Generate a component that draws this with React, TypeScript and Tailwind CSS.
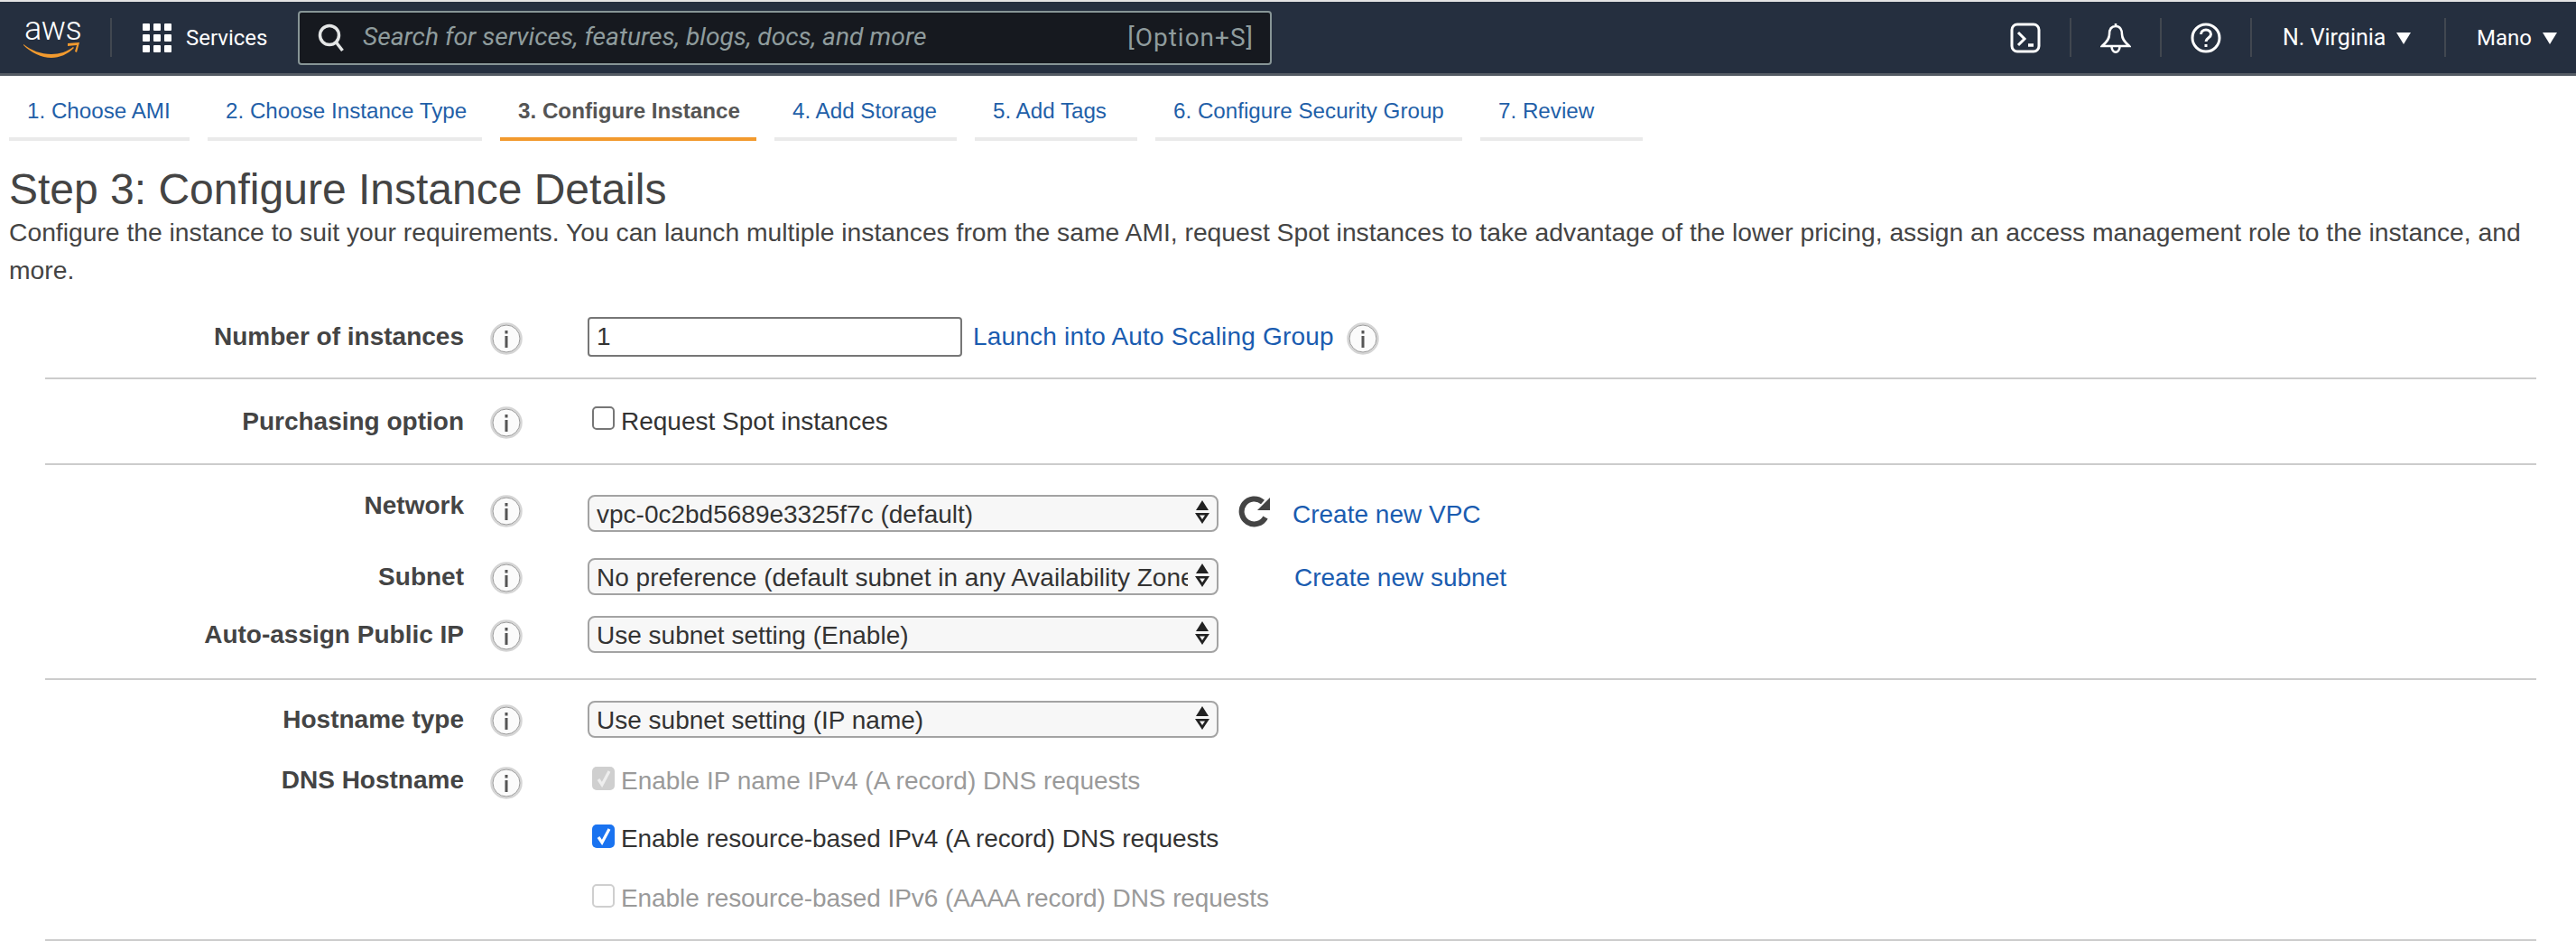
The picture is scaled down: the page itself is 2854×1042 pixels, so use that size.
const Info = ({ className = "" }: { className?: string }) => (
  <svg width="36" height="36" viewBox="0 0 36 36" className={`shrink-0 ${className}`}>
    <circle cx="18" cy="18" r="16.5" fill="#fbfbfb" stroke="#d5d5d5" strokeWidth="2.5" />
    <circle cx="18" cy="18" r="15" fill="none" stroke="#9a9a9a" strokeWidth="1" />
    <rect x="16.5" y="9" width="3" height="3.5" fill="#555" />
    <rect x="16.5" y="15" width="3" height="13" fill="#555" />
  </svg>
);

const Divider = () => <div className="w-[2px] h-[43px] bg-[#414750] shrink-0" />;

const Caret = () => (
  <svg width="16" height="14" viewBox="0 0 16 14" className="shrink-0">
    <path d="M0 1h16L8 14z" fill="#fff" />
  </svg>
);

const tabs = [
  { label: "1. Choose AMI", w: "w-[200px]" },
  { label: "2. Choose Instance Type", w: "w-[304px]" },
  { label: "3. Configure Instance", w: "w-[284px]", active: true },
  { label: "4. Add Storage", w: "w-[202px]" },
  { label: "5. Add Tags", w: "w-[180px]" },
  { label: "6. Configure Security Group", w: "w-[340px]" },
  { label: "7. Review", w: "w-[180px]" },
];

const TopBar = () => (
  <div className="border-t-2 border-t-[#e4e4e4] border-b-[3px] border-b-[#545b64] bg-[#252f3f] h-[84px] flex items-center text-white font-['Roboto',sans-serif]">
    <div className="w-[122px] pl-[27px] shrink-0 flex flex-col h-[42px] relative">
      <span className="text-[36px] leading-[30px] font-light tracking-[-0.5px] -mt-[4px]">aws</span>
      <svg width="64" height="20" viewBox="0 0 64 20" className="absolute left-[25px] top-[24px]">
        <path d="M1 4c9 7 19 11 31 11 9 0 18-3 24-8l1 1c-7 7-16 11-25 11C21 19 9 13 1 5z" fill="#f29a2e" />
        <path d="M50 3l13-1-3 11-2-1 2-7-10 1z" fill="#f29a2e" />
      </svg>
    </div>
    <Divider />
    <svg width="32" height="32" viewBox="0 0 32 32" className="ml-[34px] shrink-0" fill="#fff">
      <rect x="0" y="0" width="8" height="8" rx="1" />
      <rect x="12" y="0" width="8" height="8" rx="1" />
      <rect x="24" y="0" width="8" height="8" rx="1" />
      <rect x="0" y="12" width="8" height="8" rx="1" />
      <rect x="12" y="12" width="8" height="8" rx="1" />
      <rect x="24" y="12" width="8" height="8" rx="1" />
      <rect x="0" y="24" width="8" height="8" rx="1" />
      <rect x="12" y="24" width="8" height="8" rx="1" />
      <rect x="24" y="24" width="8" height="8" rx="1" />
    </svg>
    <span className="ml-[16px] text-[24px] w-[89px] shrink-0">Services</span>
    <div className="ml-[35px] w-[1079px] h-[60px] shrink-0 bg-[#16191f] border-2 border-[#879596] rounded-[4px] flex items-center pl-[20px] pr-[18px]">
      <svg width="30" height="32" viewBox="0 0 30 32" fill="none" stroke="#e4e6e6" strokeWidth="3.5" className="shrink-0">
        <circle cx="13" cy="13" r="10.5" />
        <path d="M20.5 21l7 9" />
      </svg>
      <span className="ml-[20px] italic text-[#8f9c9d] text-[28.200px] whitespace-nowrap">Search for services, features, blogs, docs, and more</span>
      <span className="ml-auto text-[#8f9c9d] text-[28px] tracking-[1px]">[Option+S]</span>
    </div>
    <svg width="34" height="34" viewBox="0 0 34 34" fill="none" stroke="#fff" strokeWidth="3" className="ml-[818px] shrink-0">
      <rect x="2" y="2" width="30" height="30" rx="6" />
      <path d="M9 11l7 7-7 7" />
      <path d="M20 25h6" strokeWidth="3.5" />
    </svg>
    <div className="ml-[32px]"><Divider /></div>
    <svg width="34" height="34" viewBox="0 0 34 34" fill="none" stroke="#fff" strokeWidth="2.6" className="ml-[32px] shrink-0">
      <path d="M17 1v3M17 4c-5 0-7 4-7 9 0 6-4 9-8 13h30c-4-4-8-7-8-13 0-5-2-9-7-9z" />
      <path d="M12.500 26c0 9 9 9 9 0" />
    </svg>
    <div className="ml-[32px]"><Divider /></div>
    <svg width="34" height="34" viewBox="0 0 34 34" fill="none" stroke="#fff" strokeWidth="3" className="ml-[32px] shrink-0">
      <circle cx="17" cy="17" r="15" />
      <path d="M11.500 13c0-3 2.500-5 5.500-5s5.500 2 5.500 5c0 4-5.500 4-5.500 8" />
      <path d="M17 24v3" />
    </svg>
    <div className="ml-[32px]"><Divider /></div>
    <span className="ml-[34px] text-[25px] w-[114px] shrink-0 whitespace-nowrap">N. Virginia</span>
    <div className="ml-[12px]"><Caret /></div>
    <div className="ml-[37px]"><Divider /></div>
    <span className="ml-[34px] text-[24px] w-[60px] shrink-0">Mano</span>
    <div className="ml-[13px]"><Caret /></div>
  </div>
);

const Tabs = () => (
  <div className="flex gap-[20px] pl-[10px] h-[72px] font-['Liberation_Sans',sans-serif]">
    {tabs.map((t) => (
      <div
        key={t.label}
        className={`${t.w} h-full flex items-center pl-[20px] pt-[10px] whitespace-nowrap border-b-4 text-[24.200px] ${
          t.active ? "border-[#f29a2e] text-[#555] font-bold" : "border-[#eaeaea] text-[#1f5fa8]"
        }`}
      >
        {t.label}
      </div>
    ))}
  </div>
);

const Label = ({ text, textClass = "", infoClass = "mt-[3px]" }: { text: string; textClass?: string; infoClass?: string }) => (
  <div className="w-[601px] shrink-0 flex items-center">
    <div className={`w-[464px] shrink-0 text-right font-bold text-[#444] ${textClass}`}>{text}</div>
    <Info className={`ml-[29px] ${infoClass}`} />
  </div>
);

const Arrows = () => (
  <svg width="18" height="26" viewBox="0 0 18 26" className="absolute right-[7px] top-[4px]">
    <path d="M9 0l7 11H2z" fill="#222" />
    <path d="M1 14h16l-8 12z" fill="#222" />
    <path d="M6 16.500h6l-3 4.500z" fill="#f6f6f6" />
  </svg>
);

const Select = ({ value }: { value: string }) => (
  <div className="relative w-[699px] h-[41px] shrink-0 rounded-[8px] border-2 border-[#a3a3a3] bg-[#f7f7f7] pl-[8px] pr-[32px] pt-[1px] text-[#333] text-[28px] leading-[38px] whitespace-nowrap">
    <div className="overflow-hidden">{value}</div>
    <Arrows />
  </div>
);

const Box = ({ kind }: { kind: "empty" | "blue" | "grayCheck" | "grayEmpty" }) => {
  if (kind === "empty")
    return <span className="w-[25px] h-[26px] -mt-[7px] rounded-[5px] border-2 border-[#767676] bg-white shrink-0" />;
  if (kind === "grayEmpty")
    return <span className="w-[25px] h-[26px] -mt-[7px] rounded-[5px] border-2 border-[#cfcfcf] bg-white shrink-0" />;
  return (
    <span className={`w-[25px] h-[26px] -mt-[7px] rounded-[5px] shrink-0 flex items-center justify-center ${kind === "blue" ? "bg-[#1a73f0]" : "bg-[#cfcfcf]"}`}>
      <svg width="16" height="20" viewBox="0 0 16 20" fill="none" stroke={kind === "blue" ? "#fff" : "#eee"} strokeWidth="3.200">
        <path d="M2 11l4 6 8-15" />
      </svg>
    </span>
  );
};

const CheckRow = ({ kind, text, muted, tight }: { kind: "empty" | "blue" | "grayCheck" | "grayEmpty"; text: string; muted?: boolean; tight?: boolean }) => (
  <div className={`flex items-center gap-[7px] ml-[5px] whitespace-nowrap ${muted ? "text-[#9a9a9a]" : "text-[#333]"}`}>
    <Box kind={kind} />
    <span className={tight ? "tracking-[-0.08px]" : ""}>{text}</span>
  </div>
);

const Link = ({ children, className = "" }: { children: string; className?: string }) => (
  <span className={`text-[#1a5cb0] whitespace-nowrap ${className}`}>{children}</span>
);

export default function App() {
  return (
    <div className="w-[2854px] h-[1042px] overflow-hidden bg-white text-[28px] font-['Liberation_Sans',sans-serif]">
      <TopBar />
      <Tabs />
      <div className="pl-[10px] pr-[20px]">
        <h1 className="text-[48px] leading-[54px] text-[#444] mt-[27px]">Step 3: Configure Instance Details</h1>
        <p className="text-[28.280px] leading-[42px] text-[#444] -mt-[1px]">
          Configure the instance to suit your requirements. You can launch multiple instances from the same AMI, request Spot instances to take advantage of the lower pricing, assign an access management role to the instance, and more.
        </p>
      </div>

      <div className="ml-[50px] mr-[44px]">
        <div className="border-b-2 border-[#ccc] h-[77px] flex items-end pb-[23px] -mt-[2px] box-content">
          <div className="flex items-center h-[44px] w-full">
            <Label text="Number of instances" />
            <div className="w-[415px] h-[44px] shrink-0 border-2 border-[#767676] rounded-[4px] pl-[8px] text-[#333] leading-[40px]">1</div>
            <Link className="ml-[12px] tracking-[0.2px]">Launch into Auto Scaling Group</Link>
            <Info className="ml-[14px] mt-[3px]" />
          </div>
        </div>

        <div className="border-b-2 border-[#ccc] h-[95px] flex items-center">
          <Label text="Purchasing option" />
          <CheckRow kind="empty" text="Request Spot instances" />
        </div>

        <div className="border-b-2 border-[#ccc] h-[238px] pt-[33px]">
          <div className="flex items-center h-[41px]">
            <Label text="Network" textClass="-mt-[18px]" infoClass="-mt-[6px]" />
            <Select value="vpc-0c2bd5689e3325f7c (default)" />
            <svg width="36" height="36" viewBox="0 0 36 36" fill="none" className="ml-[22px] -mt-[3px] shrink-0">
              <path d="M30 24A14 14 0 1 1 27 7" stroke="#444" strokeWidth="6" />
              <path d="M35 2v14H21z" fill="#444" />
            </svg>
            <Link className="ml-[24px] mt-[3px]">Create new VPC</Link>
          </div>
          <div className="flex items-center h-[41px] mt-[29px]">
            <Label text="Subnet" />
            <Select value="No preference (default subnet in any Availability Zone)" />
            <Link className="ml-[84px] mt-[3px]">Create new subnet</Link>
          </div>
          <div className="flex items-center h-[41px] mt-[23px]">
            <Label text="Auto-assign Public IP" />
            <Select value="Use subnet setting (Enable)" />
          </div>
        </div>

        <div className="border-b-2 border-[#ccc] h-[289px] pt-[23px]">
          <div className="flex items-center h-[41px]">
            <Label text="Hostname type" />
            <Select value="Use subnet setting (IP name)" />
          </div>
          <div className="flex items-center h-[36px] mt-[30px]">
            <Label text="DNS Hostname" textClass="-mt-[3px]" />
            <CheckRow kind="grayCheck" text="Enable IP name IPv4 (A record) DNS requests" muted />
          </div>
          <div className="flex items-center h-[36px] mt-[28px] pl-[601px]">
            <CheckRow kind="blue" text="Enable resource-based IPv4 (A record) DNS requests" tight />
          </div>
          <div className="flex items-center h-[36px] mt-[30px] pl-[601px]">
            <CheckRow kind="grayEmpty" text="Enable resource-based IPv6 (AAAA record) DNS requests" muted tight />
          </div>
        </div>
      </div>
    </div>
  );
}
